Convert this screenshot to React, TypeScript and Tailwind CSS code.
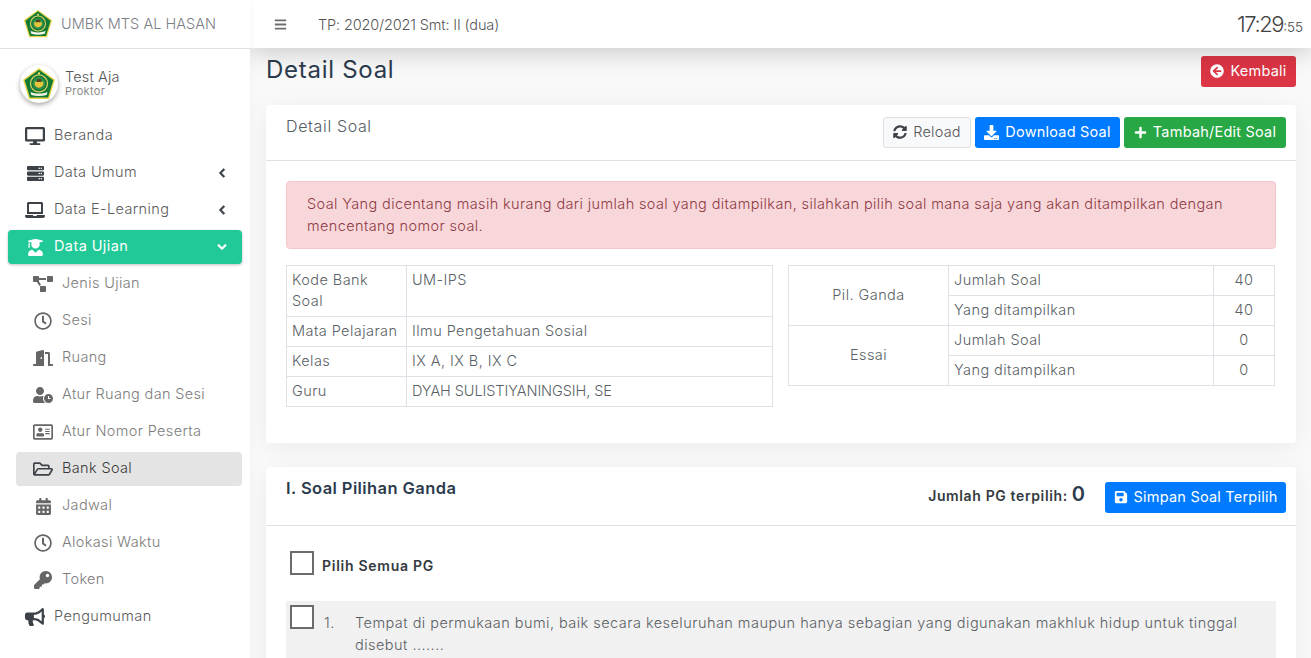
import type { ReactNode } from "react";
import {
  FaArrowCircleLeft,
  FaBars,
  FaBullhorn,
  FaCalendarAlt,
  FaChevronDown,
  FaChevronLeft,
  FaDesktop,
  FaDoorOpen,
  FaDownload,
  FaKey,
  FaLaptop,
  FaPlus,
  FaProjectDiagram,
  FaRegAddressCard,
  FaRegClock,
  FaRegFolderOpen,
  FaSave,
  FaServer,
  FaSyncAlt,
  FaUserClock,
  FaUserGraduate,
} from "react-icons/fa";

function Logo({ className }: { className: string }) {
  return (
    <svg viewBox="0 0 32 32" className={className}>
      <path d="M16 1 31 12 25.500 30H6.500L1 12Z" fill="#e8d44a" />
      <path d="M16 2.500 29.500 12.400 24.500 28.800H7.500L2.500 12.400Z" fill="#127a35" />
      <circle cx="16" cy="15.500" r="8" fill="none" stroke="#d9cf62" strokeWidth="1.200" />
      <circle cx="16" cy="15.500" r="6" fill="#2f8f4a" />
      <path d="M12 13.500c1.500 1 3 1 4 0 1 1 2.500 1 4 0v3.500c-1 1.800-2.800 2.500-4 2.500s-3-.7-4-2.500Z" fill="#eac53a" />
      <path d="M14 11.500h4v2.500h-4Z" fill="#5a3d1c" />
      <circle cx="16" cy="6" r="1" fill="#f4e36a" />
      <path d="M8 23.500c5 2 11 2 16 0l-.8 2.800c-5 1.400-9.400 1.400-14.400 0Z" fill="#f3f3e6" />
    </svg>
  );
}

function NavItem({ icon, label, arrow }: { icon: ReactNode; label: string; arrow?: boolean }) {
  return (
    <div className="mx-2 mb-[3px] flex h-[34px] items-center pl-4 pr-[15px] text-[#5a5a5a]">
      <span className="flex w-[22px] justify-center text-[#3d4248]">{icon}</span>
      <span className="ml-2 flex-1 pb-[2px] text-[14.5px] font-light tracking-[0.028em]">{label}</span>
      {arrow ? <FaChevronLeft className="text-[10px] text-[#3d4248]" stroke="currentColor" strokeWidth={40} /> : null}
    </div>
  );
}

function SubItem({ icon, label, active }: { icon: ReactNode; label: string; active?: boolean }) {
  return (
    <div
      className={`mb-[3px] ml-4 mr-2 flex h-[34px] items-center rounded pl-4 ${
        active ? "bg-[#e4e4e4] text-[#3a3a3a]" : "text-[#7d7d7d]"
      }`}
    >
      <span className={`flex w-[22px] justify-center ${active ? "text-[#3d4248]" : "text-[#666]"}`}>{icon}</span>
      <span className="ml-2 pb-[2px] text-[14.5px] font-light tracking-[0.024em]">{label}</span>
    </div>
  );
}

function Sidebar() {
  return (
    <aside className="relative z-20 h-full w-[250px] shrink-0 bg-white shadow-[0_0_10px_rgba(0,0,0,0.04)]">
      <div className="flex h-[49px] items-center border-b border-[#dee2e6] pl-[23px]">
        <Logo className="h-[30px] w-[30px]" />
        <span className="ml-2 text-[14.5px] font-light tracking-[0.002em] text-[#7b8086]">UMBK MTS AL HASAN</span>
      </div>
      <div className="flex h-[70px] items-center pl-5">
        <div className="flex h-[38px] w-[38px] items-center justify-center rounded-full bg-white shadow-[0_2px_5px_rgba(0,0,0,0.35)]">
          <Logo className="h-[34px] w-[34px]" />
        </div>
        <div className="ml-[7px] pb-[3px]">
          <div className="text-[14.5px] font-light leading-[17px] tracking-[0.01em] text-[#555]">Test Aja</div>
          <div className="text-[11px] leading-[12px] tracking-[0.03em] text-[#8a8a8a]">Proktor</div>
        </div>
      </div>
      <NavItem icon={<FaDesktop className="text-[20px]" />} label="Beranda" />
      <NavItem icon={<FaServer className="text-[17px]" />} label="Data Umum" arrow />
      <NavItem icon={<FaLaptop className="text-[20px]" />} label="Data E-Learning" arrow />
      <div className="mx-2 mb-[3px] flex h-[34px] items-center rounded bg-[#20c997] pl-4 pr-[15px] text-white shadow-[0_1px_3px_rgba(0,0,0,0.25)]">
        <span className="flex w-[22px] justify-center">
          <FaUserGraduate className="text-[17px]" />
        </span>
        <span className="ml-2 flex-1 pb-[2px] text-[14.5px] font-normal tracking-[0.028em]">Data Ujian</span>
        <FaChevronDown className="text-[10px]" stroke="currentColor" strokeWidth={40} />
      </div>
      <SubItem icon={<FaProjectDiagram className="text-[20px]" />} label="Jenis Ujian" />
      <SubItem icon={<FaRegClock className="text-[18px]" />} label="Sesi" />
      <SubItem icon={<FaDoorOpen className="text-[20px]" />} label="Ruang" />
      <SubItem icon={<FaUserClock className="text-[20px]" />} label="Atur Ruang dan Sesi" />
      <SubItem icon={<FaRegAddressCard className="text-[20px]" />} label="Atur Nomor Peserta" />
      <SubItem icon={<FaRegFolderOpen className="text-[20px]" />} label="Bank Soal" active />
      <SubItem icon={<FaCalendarAlt className="text-[17px]" />} label="Jadwal" />
      <SubItem icon={<FaRegClock className="text-[18px]" />} label="Alokasi Waktu" />
      <SubItem icon={<FaKey className="text-[18px]" />} label="Token" />
      <NavItem icon={<FaBullhorn className="text-[20px]" />} label="Pengumuman" />
    </aside>
  );
}

function Btn({ className, icon, label }: { className: string; icon: ReactNode; label: string }) {
  return (
    <button type="button" className={`flex h-[31px] items-center justify-center gap-[6px] rounded-[3px] pb-px text-[14.5px] tracking-[0.015em] ${className}`}>
      {icon}
      {label}
    </button>
  );
}

const cell = "border border-[#dee2e6] px-[5px] pt-[3px] pb-[5px] align-top font-light";

function Tables() {
  return (
    <div className="mt-4 flex justify-between pr-px text-[14.5px] leading-[21px] tracking-[0.03em] text-[#5a5f65]">
      <table className="h-fit w-[487px] border-collapse">
        <tbody>
          <tr>
            <td className={`${cell} w-[120px]`}>
              Kode Bank
              <br />
              Soal
            </td>
            <td className={cell}>UM-IPS</td>
          </tr>
          <tr>
            <td className={cell}>Mata Pelajaran</td>
            <td className={cell}>Ilmu Pengetahuan Sosial</td>
          </tr>
          <tr>
            <td className={cell}>Kelas</td>
            <td className={cell}>IX A, IX B, IX C</td>
          </tr>
          <tr>
            <td className={cell}>Guru</td>
            <td className={`${cell} tracking-[-0.005em]`}>DYAH SULISTIYANINGSIH, SE</td>
          </tr>
        </tbody>
      </table>
      <table className="h-fit w-[487px] border-collapse">
        <tbody>
          <tr>
            <td rowSpan={2} className={`${cell} w-[160px] !align-middle text-center`}>
              Pil. Ganda
            </td>
            <td className={cell}>Jumlah Soal</td>
            <td className={`${cell} w-[61px] text-center`}>40</td>
          </tr>
          <tr>
            <td className={cell}>Yang ditampilkan</td>
            <td className={`${cell} text-center`}>40</td>
          </tr>
          <tr>
            <td rowSpan={2} className={`${cell} !align-middle text-center`}>
              Essai
            </td>
            <td className={cell}>Jumlah Soal</td>
            <td className={`${cell} text-center`}>0</td>
          </tr>
          <tr>
            <td className={cell}>Yang ditampilkan</td>
            <td className={`${cell} text-center`}>0</td>
          </tr>
        </tbody>
      </table>
    </div>
  );
}

export default function App() {
  return (
    <div className="flex h-[658px] w-[1311px] overflow-hidden bg-[#f9f9f9] font-['Inter','Liberation_Sans',sans-serif]">
      <Sidebar />
      <div className="flex min-w-0 flex-1 flex-col">
        <header className="relative z-10 flex h-[48px] shrink-0 items-center bg-white pl-[24px] pr-2 shadow-[0_4px_26px_rgba(0,0,0,0.2)]">
          <FaBars className="text-[13px] text-[#6d6d6d]" />
          <span className="ml-[31px] flex-1 pt-px text-[14.5px] font-light tracking-[-0.01em] text-[#555]">TP: 2020/2021 Smt: II (dua)</span>
          <span className="text-[22px] font-light text-[#444]">
            <span className="tracking-[-0.064em]">17:29</span>
            <span className="text-[13.5px]">:55</span>
          </span>
        </header>
        <main className="flex-1 overflow-hidden pl-4 pr-[15px]">
          <div className="flex h-[57px] items-start justify-between">
            <h1 className="mt-[4px] text-[24px] font-normal tracking-[0.03em] text-[#2c3b4d]">Detail Soal</h1>
            <Btn
              className="mt-2 w-[95px] gap-[4px] bg-[#dc3545] text-white"
              icon={<FaArrowCircleLeft className="text-[14px]" />}
              label="Kembali"
            />
          </div>
          <section className="rounded bg-white shadow-[0_4px_24px_rgba(0,0,0,0.06)]">
            <div className="flex h-[56px] items-start justify-between border-b border-[#dee2e6] pl-5 pr-[10px]">
              <h2 className="mt-[9px] text-[16px] font-light tracking-[0.04em] text-[#545c64]">Detail Soal</h2>
              <div className="mt-3 flex gap-1">
                <Btn
                  className="w-[88px] border border-[#dddfe2] bg-[#f8f9fa] font-light tracking-[0.03em] text-[#555]"
                  icon={<FaSyncAlt className="text-[14px] text-[#3d4248]" />}
                  label="Reload"
                />
                <Btn className="w-[145px] bg-[#007bff] text-white" icon={<FaDownload className="text-[15px]" />} label="Download Soal" />
                <Btn className="w-[162px] bg-[#28a745] text-white" icon={<FaPlus className="text-[13px]" />} label="Tambah/Edit Soal" />
              </div>
            </div>
            <div className="h-[282px] px-5 pt-5">
              <div className="h-[68px] rounded border border-[#f5c6cb] bg-[#f8d7da] px-5 py-[11px] text-[14.5px] font-light leading-[22px] tracking-[0.026em] text-[#8f3a44]">
                Soal Yang dicentang masih kurang dari jumlah soal yang ditampilkan, silahkan pilih soal mana saja yang akan ditampilkan dengan
                <br />
                mencentang nomor soal.
              </div>
              <Tables />
            </div>
          </section>
          <section className="mt-6 rounded bg-white shadow-[0_4px_24px_rgba(0,0,0,0.06)]">
            <div className="flex h-[59px] items-start justify-between border-b border-[#dee2e6] pl-5 pr-[10px]">
              <h2 className="mt-[9px] text-[16.5px] font-semibold tracking-[0.025em] text-[#2c3b4d]">I. Soal Pilihan Ganda</h2>
              <div className="mt-[15px] flex items-start">
                <span className="mt-[3px] text-[14px] font-semibold tracking-[0.045em] text-[#343a40]">Jumlah PG terpilih:</span>
                <span className="ml-1 text-[20px] font-semibold leading-[25px] text-[#2c3b4d]">0</span>
                <Btn className="ml-5 w-[181px] bg-[#007bff] text-white" icon={<FaSave className="text-[14px]" />} label="Simpan Soal Terpilih" />
              </div>
            </div>
            <div className="px-5 pb-5 pt-[24px]">
              <div className="flex items-center pl-1">
                <span className="h-6 w-6 border-2 border-[#6b6b6b] bg-white" />
                <span className="ml-2 mt-[5px] text-[14px] font-semibold tracking-[0.052em] text-[#343a40]">Pilih Semua PG</span>
              </div>
              <div className="mt-[25px] flex bg-[#f1f1f1] pb-3 pl-1 pt-1">
                <span className="h-6 w-6 shrink-0 border-2 border-[#6b6b6b] bg-white" />
                <div className="flex pt-[7px] text-[14.5px] font-light leading-[22px] tracking-[0.032em] text-[#5a5f65]">
                  <span className="ml-[10px] w-[31px] shrink-0">1.</span>
                  <p>
                    Tempat di permukaan bumi, baik secara keseluruhan maupun hanya sebagian yang digunakan makhluk hidup untuk tinggal
                    <br />
                    disebut .......
                  </p>
                </div>
              </div>
            </div>
          </section>
        </main>
      </div>
    </div>
  );
}
